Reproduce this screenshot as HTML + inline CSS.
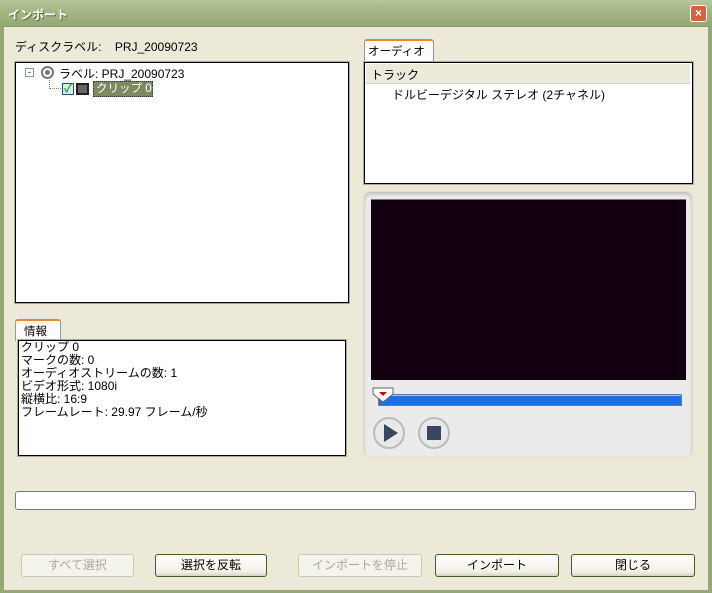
<!DOCTYPE html>
<html><head><meta charset="utf-8"><style>
*{box-sizing:border-box;margin:0;padding:0}
body{width:712px;height:593px;overflow:hidden;background:#ECE9D8;font-family:"Liberation Sans","Noto Sans CJK JP",sans-serif;font-size:12px;color:#000;position:relative}
.abs{position:absolute;white-space:nowrap}
.title{left:0;top:0;width:712px;height:27px;background:linear-gradient(#b7c79a,#a4b784 40%,#94a874);border-bottom:1px solid #8a9c6a}
.title span{position:absolute;left:8px;top:6px;color:#fff;font-weight:bold;font-size:12px;text-shadow:1px 1px 0 #5a6a3a}
.lb{left:0;top:27px;width:4px;height:566px;background:#94a874}
.rb{right:0;top:27px;width:4px;height:566px;background:#94a874}
.bb{left:0;bottom:0;width:712px;height:3px;background:#94a874}
.box{background:#fff;border:1px solid #000;box-shadow:0 0 0 1px #aca899}
.tab{background:#fcfcfe;border:1px solid #919b9c;border-bottom:none;border-top:2px solid #e68b2c;border-radius:3px 3px 0 0;padding:2px 3px 0;font-size:11.5px}
.btn{height:23px;border:1px solid #4a5a2a;border-radius:3px;background:linear-gradient(#fff,#f3f1e6 80%,#d6d0c5);text-align:center;line-height:21px;font-size:12px}
.dis{border-color:#c9c7ba;color:#aca899;background:#f5f4ea}
</style></head><body>
<div class="abs title"><span>インポート</span></div>
<div class="abs" style="left:690px;top:5px;width:17px;height:17px;background:#d5613f;border:1px solid #fff;border-radius:3px;color:#fff;font-weight:bold;font-size:12px;text-align:center;line-height:14px">×</div>
<div class="abs lb"></div><div class="abs rb"></div><div class="abs bb"></div>
<div class="abs" style="left:15px;top:38px">ディスクラベル:&nbsp;&nbsp;&nbsp; PRJ_20090723</div>
<div class="abs box" style="left:15px;top:62px;width:334px;height:241px"></div>
<div class="abs" style="left:25px;top:68px;width:9px;height:9px;border:1px solid #7f9db9;font-size:9px;line-height:6px;text-align:center;color:#000">-</div>
<div class="abs" style="left:41px;top:66px;width:13px;height:13px;border:2px solid #777;border-radius:50%"></div>
<div class="abs" style="left:45px;top:70px;width:5px;height:5px;background:#777;border-radius:50%"></div>
<div class="abs" style="left:59px;top:65px">ラベル: PRJ_20090723</div>
<div class="abs" style="left:49px;top:80px;width:12px;height:9px;border-left:1px dotted #888;border-bottom:1px dotted #888"></div>
<div class="abs" style="left:62px;top:83px;width:12px;height:12px;border:1px solid #1c5180;background:#dfe8ee;color:#21a121;font-size:11px;line-height:10px;text-align:center;font-weight:bold">✓</div>
<div class="abs" style="left:76px;top:83px;width:13px;height:12px;border:2px solid #222;background:#666"></div>
<div class="abs" style="left:93px;top:81px;width:60px;height:16px;background:#7c8a60;color:#fff;border:1px dotted #333;padding-left:2px;line-height:14px;font-size:11.5px">クリップ 0</div>

<div class="abs tab" style="left:364px;top:39px;width:70px;height:24px">オーディオ</div>
<div class="abs box" style="left:364px;top:62px;width:329px;height:122px"></div>
<div class="abs" style="left:366px;top:64px;width:324px;height:20px;background:#ebeadb;border-bottom:1px solid #d6d2c2;padding:2px 5px">トラック</div>
<div class="abs" style="left:392px;top:86px">ドルビーデジタル ステレオ (2チャネル)</div>

<div class="abs" style="left:364px;top:192px;width:328px;height:265px;background:#ebebeb;border-radius:7px;box-shadow:inset 0 2px 3px #bbb,0 0 2px #ccc"></div>
<div class="abs" style="left:371px;top:199px;width:315px;height:181px;background:#120010;border-top:1px solid #777"></div>
<div class="abs" style="left:378px;top:394px;width:304px;height:12px;background:#1e6ee8;border:1px solid #6a7a9a;box-shadow:inset 0 1px 0 #9cc"></div>
<svg class="abs" style="left:372px;top:387px" width="22" height="16"><path d="M1 1H21V7L11 15L1 7Z" fill="#fff" stroke="#666"/><path d="M7 5H15L11 9Z" fill="#c00"/></svg>
<svg class="abs" style="left:372px;top:416px" width="34" height="34"><circle cx="17" cy="17" r="15" fill="#e8e8e8" stroke="#bbb" stroke-width="2"/><path d="M12 8V26L26 17Z" fill="#3a4560"/></svg>
<svg class="abs" style="left:417px;top:416px" width="34" height="34"><circle cx="17" cy="17" r="15" fill="#e8e8e8" stroke="#bbb" stroke-width="2"/><rect x="10" y="10" width="14" height="14" fill="#3a4560"/></svg>

<div class="abs tab" style="left:15px;top:319px;width:46px;height:22px;padding-left:8px">情報</div>
<div class="abs box" style="left:18px;top:340px;width:328px;height:116px;padding:0 2px;line-height:13px">クリップ 0<br>マークの数: 0<br>オーディオストリームの数: 1<br>ビデオ形式: 1080i<br>縦横比: 16:9<br>フレームレート: 29.97 フレーム/秒</div>

<div class="abs" style="left:15px;top:491px;width:681px;height:19px;background:#fff;border:1px solid #7a7a7a;border-radius:3px"></div>

<div class="abs btn dis" style="left:21px;top:554px;width:113px">すべて選択</div>
<div class="abs btn" style="left:155px;top:554px;width:112px">選択を反転</div>
<div class="abs btn dis" style="left:298px;top:554px;width:124px">インポートを停止</div>
<div class="abs btn" style="left:435px;top:554px;width:124px">インポート</div>
<div class="abs btn" style="left:571px;top:554px;width:124px">閉じる</div>
</body></html>
